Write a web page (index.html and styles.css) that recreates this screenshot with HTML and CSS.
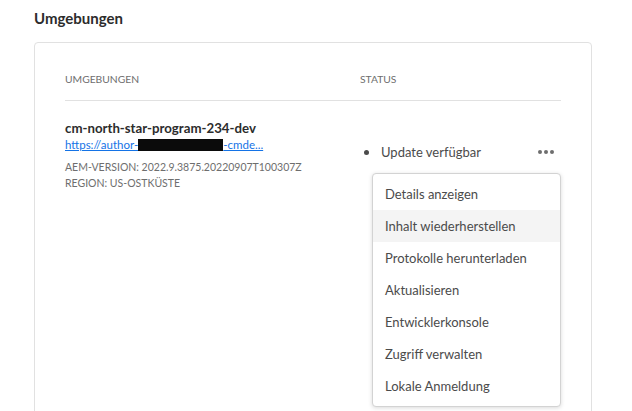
FILE: index.html
```html
<!DOCTYPE html>
<html lang="de">
<head>
<meta charset="utf-8">
<title>Umgebungen</title>
<link rel="stylesheet" href="styles.css">
</head>
<body>
<div class="page">
  <h1 class="title">Umgebungen</h1>
  <section class="card">
    <div class="thead">
      <div class="col-name">UMGEBUNGEN</div>
      <div class="col-status">STATUS</div>
    </div>
    <div class="row">
      <div class="col-name env">
        <div class="env-name">cm-north-star-program-234-dev</div>
        <a class="env-link" href="#">https://author-<span class="redact"></span>-cmde...</a>
        <div class="meta">AEM-VERSION: 2022.9.3875.20220907T100307Z</div>
        <div class="meta">REGION: US-OSTKÜSTE</div>
      </div>
      <div class="col-status status">
        <span class="dot"></span>
        <span class="status-text">Update verfügbar</span>
        <span class="more"><i></i><i></i><i></i></span>
        <ul class="menu">
          <li>Details anzeigen</li>
          <li class="hover">Inhalt wiederherstellen</li>
          <li>Protokolle herunterladen</li>
          <li>Aktualisieren</li>
          <li>Entwicklerkonsole</li>
          <li>Zugriff verwalten</li>
          <li>Lokale Anmeldung</li>
        </ul>
      </div>
    </div>
  </section>
</div>
</body>
</html>
```
FILE: styles.css
```css
html, body {
  margin: 0;
  padding: 0;
  background: #ffffff;
  overflow: hidden;
}
body {
  font-family: Lato, "Liberation Sans", sans-serif;
  color: #4b4b4b;
}
.page {
  padding: 7px 40px 0 34px;
}
.title {
  margin: 0;
  font-size: 15px;
  line-height: 22px;
  font-weight: 700;
  color: #2c2c2c;
}
.card {
  margin-top: 13px;
  border: 1px solid #e1e1e1;
  border-radius: 4px;
  padding: 27px 30px 60px 30px;
  height: 400px;
}
.thead {
  display: flex;
  border-bottom: 1px solid #e1e1e1;
  font-size: 10.3px;
  line-height: 18px;
  padding-bottom: 12px;
  color: #6e6e6e;
}
.col-name {
  width: 295px;
  flex: none;
}
.col-status {
  flex: 1;
}
.row {
  display: flex;
  align-items: flex-start;
  padding-top: 18px;
}
.env-name {
  font-weight: 700;
  font-size: 13.25px;
  line-height: 18px;
  color: #2c2c2c;
}
.env-link {
  display: block;
  width: max-content;
  font-size: 11.5px;
  line-height: 16px;
  color: #1473e6;
  text-decoration: underline;
}
.redact {
  display: inline-block;
  width: 85px;
  height: 12px;
  background: #0b0b0b;
  vertical-align: -2px;
}
.meta {
  font-size: 10.5px;
  line-height: 16px;
  color: #6e6e6e;
}
.env-link + .meta {
  margin-top: 6px;
}
.status {
  position: relative;
  display: flex;
  align-items: center;
  margin-top: 24px;
  padding-left: 4px;
  font-size: 13px;
  line-height: 18px;
  color: #4b4b4b;
}
.dot {
  width: 5px;
  height: 5px;
  border-radius: 50%;
  background: #4b4b4b;
  margin-right: 12px;
}
.status-text {
  flex: 1;
}
.more {
  display: flex;
  gap: 2px;
  margin-right: 7px;
}
.more i {
  width: 4px;
  height: 4px;
  border-radius: 50%;
  background: #6e6e6e;
}
.menu {
  position: absolute;
  top: 30px;
  left: 12px;
  right: 0;
  margin: 0;
  padding: 4px 0;
  list-style: none;
  background: #ffffff;
  border: 1px solid #d3d3d3;
  border-radius: 4px;
  box-shadow: 0 1px 4px rgba(0, 0, 0, 0.15);
}
.menu li {
  height: 32px;
  line-height: 32px;
  padding-left: 12px;
  font-size: 13px;
  color: #4b4b4b;
}
.menu li.hover {
  background: #f4f4f4;
}
```
